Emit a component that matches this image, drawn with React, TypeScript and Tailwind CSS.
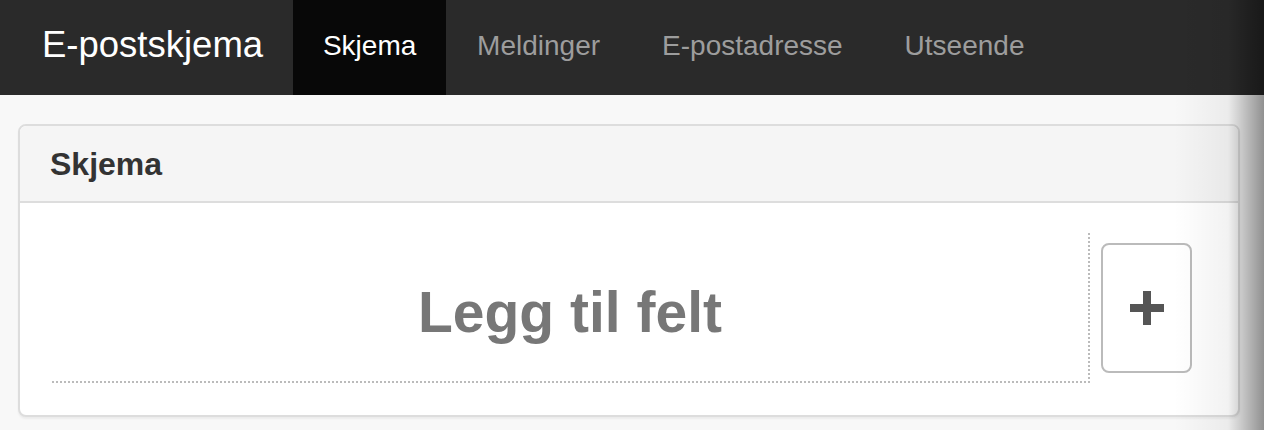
import React from "react";

const tabs = ["Skjema", "Meldinger", "E-postadresse", "Utseende"];

export default function App() {
  return (
    <div
      className="relative min-h-[430px] overflow-hidden bg-[#f8f8f8]"
      style={{ fontFamily: '"Liberation Sans", Arial, sans-serif' }}
    >
      {/* Navbar */}
      <nav className="flex h-[95px] items-stretch bg-[#2a2a2a]">
        <div className="flex items-center pb-[4px] pl-[42px] pr-[30px] text-[36.5px] leading-none text-white">
          E-postskjema
        </div>
        <ul className="flex items-stretch">
          {tabs.map((tab, i) => (
            <li
              key={tab}
              className={`flex items-center justify-center pb-[4px] text-[28px] leading-none ${
                i === 0 ? "w-[153px] bg-[#080808] text-white" : "px-[31px] text-[#9d9d9d]"
              }`}
            >
              {tab}
            </li>
          ))}
        </ul>
      </nav>

      {/* Panel */}
      <div className="ml-[18px] mr-[24px] mt-[29px] rounded-[8px] border-2 border-[#dddddd] bg-white shadow-[0_2px_2px_rgba(0,0,0,0.05)]">
        <div className="flex h-[77px] items-center rounded-t-[6px] border-b-2 border-[#dddddd] bg-[#f5f5f5] px-[30px]">
          <h3 className="text-[32px] font-bold leading-none text-[#333333]">Skjema</h3>
        </div>
        <div className="flex items-center gap-[11px] pb-[32px] pl-[32px] pr-[46px] pt-[30px]">
          <div className="flex h-[150px] flex-1 items-center justify-center border-b-2 border-r-2 border-dotted border-[#bbbbbb] pt-[10px]">
            <span className="text-[57px] font-bold leading-none text-[#777777]">Legg til felt</span>
          </div>
          <button className="flex h-[130px] w-[91px] items-center justify-center rounded-[8px] border-2 border-[#bbbbbb] bg-white">
            <svg width="34" height="34" viewBox="0 0 34 34">
              <rect x="0" y="13" width="34" height="8" fill="#555555" />
              <rect x="13" y="0" width="8" height="34" fill="#555555" />
            </svg>
          </button>
        </div>
      </div>

      {/* Right edge shade */}
      <div className="pointer-events-none absolute bottom-0 right-0 top-0 w-[90px] bg-[linear-gradient(to_right,rgba(0,0,0,0),rgba(0,0,0,0.05)_60%,rgba(0,0,0,0.42))]" />
    </div>
  );
}
